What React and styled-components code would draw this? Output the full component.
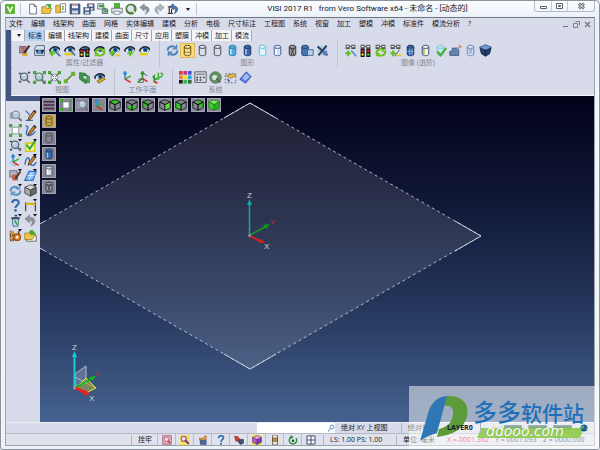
import React, { useState } from 'react';
import styled, { createGlobalStyle } from 'styled-components';

const GlobalStyle = createGlobalStyle`
  * { box-sizing: border-box; }
  body {
    margin: 0;
    background: #e6e9ee;
    font-family: "Open Sans", "Noto Sans CJK SC", sans-serif;
    font-size: 7px;
    line-height: 10px;
    color: #16181f;
  }
  button, input {
    margin: 0;
    padding: 0;
    border: 0;
    background: none;
    font: inherit;
    color: inherit;
  }
  svg { display: block; }
`;

// icon parts
const Eye = () => (
  <g>
    <path d="M1 8C3 2 12 0 15 6L13 10C11 6 5 6 3 10Z" fill="#1d2733" />
    <path d="M3 8C6 4 11 4 14 8C11 12 6 12 3 8Z" fill="#dfe9f4" />
    <circle cx="9" cy="7" r="3" fill="#2f6cab" />
    <circle cx="9" cy="7" r="1.2" fill="#0a1420" />
  </g>
);

const Glasses = () => (
  <g>
    <path d="M2 1h5v5h-5zM9 1h5v5h-5z" fill="#4a4d52" />
    <path d="M3 2h3v2h-3zM10 2h3v2h-3z" fill="#e8eaee" />
    <path d="M7 3h2" stroke="#222" />
  </g>
);

const Plus = () => <path d="M5 8v7M1.500 11.500h7" stroke="#5cc421" strokeWidth="2.400" />;
const Minus = () => <path d="M2 12.500h10" stroke="#e8cc10" strokeWidth="3" />;

const Lights = () => (
  <g>
    <path d="M2 6h5v10h-5zM9 6h5v10h-5z" fill="#151515" />
    <circle cx="4.500" cy="8.500" r="1.500" fill="#e42a1c" />
    <circle cx="11.500" cy="8.500" r="1.500" fill="#e42a1c" />
    <circle cx="4.500" cy="13" r="1.500" fill="#f2c81c" />
    <circle cx="11.500" cy="13" r="1.500" fill="#39c22c" />
  </g>
);

const Ring = ({ color = '#6fbf1f' }) => (
  <g fill="none" stroke={color} strokeWidth="2.600">
    <path d="M3 11C3 7 9 5 12 8" />
    <path d="M14 9C14 14 8 16 4 13" />
    <path d="M10 9h4v-4M7 12H3v3" strokeWidth="1.600" />
  </g>
);

const Cyl = ({ fill = 'none', line = '#46494f', shine }) => (
  <g stroke={line} strokeWidth="1.200">
    <path d="M4 3.500v9C4 15 12 15 12 12.500v-9" fill={fill} />
    <ellipse cx="8" cy="3.500" rx="4" ry="2" fill={fill} />
    {shine && <path d="M6 6v7" stroke={shine} strokeWidth="2" />}
  </g>
);

const Cube = ({ top = 'none', left = 'none', right = 'none', line = '#0d140d' }) => (
  <g stroke={line} strokeLinejoin="round">
    <path d="M8 1L15 4L8 7.500L1 4Z" fill={top} />
    <path d="M1 4v7.500L8 15V7.500Z" fill={left} />
    <path d="M15 4v7.500L8 15V7.500Z" fill={right} />
  </g>
);

const Lens = ({ color = '#8a96a6' }) => (
  <g>
    <path d="M10 10L14.500 14.500" stroke="#6b7078" strokeWidth="2.200" />
    <circle cx="7.500" cy="7" r="4.500" fill="#b9cde2" stroke={color} strokeWidth="1.500" />
    <path d="M5 6C6 4 8 4 9 5" fill="none" stroke="#fff" />
  </g>
);

const Corners = ({ inner = '#fff' }) => (
  <g>
    <path d="M2 2l3 3M14 2l-3 3M2 14l3-3M14 14l-3-3" stroke="#3d7a2a" />
    <path d="M4 4h8v8h-8z" fill={inner} stroke="#7f8a92" />
    <path d="M0 0h4v4h-4zM12 0h4v4h-4zM0 12h4v4h-4zM12 12h4v4h-4z" fill="#46a533" />
  </g>
);

const Axes = () => (
  <g fill="none" strokeWidth="2">
    <path d="M5 10V2M3 4l2-3 2 3" stroke="#2a8fd8" />
    <path d="M5 10L12 6" stroke="#3cb030" />
    <path d="M5 10L12 14" stroke="#e02a1c" />
  </g>
);

const Pencil = () => (
  <g>
    <path d="M6 10L12.500 1.500L15 3.500L8.500 12L5 14Z" fill="#c8802c" stroke="#4d3418" />
    <path d="M12.500 1.500L15 3.500L14 5L11.500 3Z" fill="#2a2c33" />
  </g>
);

const Drop = () => <path d="M11 0h5l-2.500 3z" fill="#111" />;

const Page = ({ fill = '#fff' }) => (
  <path d="M3.500 1.500h6l3 3v10h-9zM9.500 1.500v3h3" fill={fill} stroke="#4a5260" />
);

const Disk = () => (
  <g>
    <path d="M1.500 1.500h13v13h-13z" fill="#4a6596" stroke="#27375a" />
    <path d="M4 2h8v5h-8z" fill="#f0f3f8" />
    <path d="M4 10h8v4h-8z" fill="#ced6e2" />
    <path d="M4 3h8" stroke="#d85848" />
  </g>
);

const Folder = () => (
  <g>
    <path d="M1 5h5l1 2h7l-2 7H1z" fill="#f0c441" stroke="#a5791c" />
    <path d="M5 5C6 1 10 0 12 2l2-1-1 6-5-2 2-1C9 3 7 3 5 5Z" fill="#4dae2d" />
  </g>
);

const Bend = ({ color = '#8d949d' }) => (
  <path d="M7 1L1 6l6 5V8c4 0 4 3 1 7C16 12 15 4 7 4Z" fill={color} stroke="#73797f" strokeWidth="0.600" />
);

const glyphs = {
  logo: <g><rect width="16" height="16" rx="2" fill="#5fb432" /><path d="M4 4l4 8 4-8" fill="none" stroke="#fff" strokeWidth="2.400" /></g>,
  page: <Page />,
  folder: <Folder />,
  folderPage: <g><path d="M7 1h7v11H7z" fill="#fff" stroke="#65707c" /><path d="M1 3h5l1 3v7H1z" fill="#efc341" stroke="#a5791c" /><path d="M9 5h3M9 8h3" stroke="#6db535" strokeWidth="2" /></g>,
  disk: <Disk />,
  disks: <g><g transform="translate(5 0) scale(.68)"><Disk /></g><g transform="translate(0 5) scale(.68)"><Disk /></g></g>,
  mixed: <g><path d="M1 1h8v7H1z" fill="#e7ebf1" stroke="#4e5a70" /><path d="M3 4h6M9 7l5 4" stroke="#38a12c" strokeWidth="3" /><path d="M7 8h7v6H7z" fill="#a4afbf" stroke="#4e5a70" /><path d="M9 11h6" stroke="#36a92c" strokeWidth="2" /></g>,
  print: <g><path d="M4 0h8v7H4z" fill="#55b236" /><path d="M1 7h14v6H1z" fill="#e4e7eb" stroke="#575d65" /><path d="M4 11h8v4H4z" fill="#fff" stroke="#737981" /></g>,
  find: <g><circle cx="8" cy="8" r="7.500" fill="#5c7c4a" /><circle cx="7.500" cy="7.500" r="4" fill="#d3e7ef" stroke="#e7eee3" /><path d="M10 10l4 4" stroke="#e7eee3" strokeWidth="2" /></g>,
  undo: <Bend />,
  redo: <g transform="translate(16 0) scale(-1 1)"><Bend color="#b3b8bf" /></g>,
  history: <g><path d="M8 1L4 5l5 4V7c3 0 3 3 1 7 6-3 5-10-1-10z" fill="#4778b8" stroke="#2d4c7a" /><path d="M1 5h5M1 14h7M3 5v9M6 8v6" stroke="#4d2d2d" strokeWidth="1.600" /></g>,
  brush: <g><path d="M2 3h8v8H2z" fill="#a8a0b4" stroke="#694f58" /><path d="M4 5h4M4 8h5" stroke="#ce4a35" strokeWidth="2" /><path d="M7 12L14 2" stroke="#35322f" strokeWidth="2.500" /><path d="M5 13h7" stroke="#d6a62c" strokeWidth="3" /></g>,
  eyePage: <g><path d="M4 2h10v12H2V6z" fill="#d5e2f0" stroke="#3f5069" /><path d="M3 7h11l-2 5H5z" fill="#1b2939" /><circle cx="8" cy="10" r="2.500" fill="#5d9bd2" /></g>,
  eyePlusArrow: <g><Eye /><Plus /><path d="M9 9l6 6" stroke="#426fae" strokeWidth="2" /></g>,
  eyeMinusArrow: <g><Eye /><Minus /><path d="M10 9l5 5" stroke="#426fae" strokeWidth="2" /></g>,
  eyeLights: <g><Eye /><Lights /></g>,
  eyeRing: <g><Eye /><Ring /></g>,
  eyeSlash: <g><Eye /><Plus /><path d="M5 15l6-7" stroke="#555" /><path d="M9 14h6" stroke="#e8cc10" strokeWidth="2" /></g>,
  eyePlus: <g><Eye /><g transform="translate(4 0)"><Plus /></g></g>,
  eyeMinus: <g><Eye /><Minus /></g>,
  refresh: <g fill="none" stroke="#4d82b9" strokeWidth="2.400"><path d="M2 8C2 3 9 1 12 5M14 8c0 5-7 7-10 3" /><path d="M13 1v5H8M3 15v-5h5" strokeWidth="1.600" /></g>,
  cyl: <Cyl />,
  cylGold: <g><Cyl line="#5e4c1a" /><path d="M4 9c2 2 6 2 8 0" fill="none" stroke="#5e4c1a" strokeWidth="0.800" /></g>,
  cylSky: <Cyl fill="#49aee0" line="#317ba8" shine="#b5e3f7" />,
  cylBlue: <Cyl fill="#3a68ad" line="#1c3766" shine="#9fc0ec" />,
  cylCyan: <Cyl fill="#dff4fa" line="#52c6dd" />,
  cylHalf: <Cyl fill="#d6e1f2" line="#46639a" shine="#fff" />,
  cylWhite: <Cyl fill="#d3dae4" line="#4d525b" shine="#fff" />,
  cylDark: <g><Cyl fill="#9b9da3" line="#303237" /><path d="M6 5l4 9M10 5l-4 9" stroke="#303237" /></g>,
  cylBox: <g><g transform="translate(-3 0)"><Cyl fill="#4577b4" line="#24466f" /></g><path d="M8 7h7v7H8z" fill="#b7d0ec" stroke="#2f5a92" /></g>,
  tools: <g><path d="M2 2h12v12H2z" fill="#b9cde5" /><path d="M2 3l12 11M13 2L3 14" stroke="#2a3f5f" strokeWidth="2.400" /><circle cx="11" cy="11" r="3" fill="#5580b5" /></g>,
  gPlus: <g><Glasses /><Plus /><path d="M9 8l6 7" stroke="#5a8cc9" strokeWidth="2" /></g>,
  gLights: <g><Glasses /><Lights /></g>,
  gRing: <g><Glasses /><Ring /></g>,
  gSlash: <g><Glasses /><Plus /><path d="M7 15l6-8" stroke="#444" /><path d="M9 14h6" stroke="#e8cc10" strokeWidth="2" /></g>,
  cylGrid: <g><Cyl fill="#3765a8" line="#16305d" /><path d="M7 5v9M10 5v9M4 9h8" stroke="#9bbce8" /></g>,
  cylLime: <Cyl fill="#f2f6da" line="#355076" shine="#a3c94a" />,
  cylCheck: <g><Cyl fill="#b8e8f2" line="#7ccbdc" /><path d="M4 9l4 5 7-9" fill="none" stroke="#43ac24" strokeWidth="2.400" /></g>,
  cylPart: <g><path d="M4 5h8v9H1V9h3z" fill="#6383ae" stroke="#3b5378" /><path d="M10 6h3" stroke="#dae5f3" /><path d="M12 0l4 4-3 1z" fill="#ee7418" /></g>,
  cylPale: <g><Cyl fill="#d5e2f5" line="#6888b8" /><path d="M6 6l4 6M10 6l-4 6" stroke="#6888b8" /></g>,
  gem: <g><path d="M1 4l7-3 7 3-2 8-5 3-5-3z" fill="#223e68" stroke="#101c30" /><path d="M1 4l7 3 7-3-7-3z" fill="#6d9ad2" /><path d="M8 7v8" stroke="#0f1a2d" /></g>,
  zoomNet: <g><path d="M1 3h3M12 2h3M1 13h3" stroke="#444b55" strokeWidth="2" /><Lens color="#5a6472" /></g>,
  zoomFit: <g><Corners inner="#c8dbe8" /><Lens color="#568a60" /></g>,
  fit: <g><Corners inner="#e8eef0" /><path d="M3 3l4 4M13 3L9 7M3 13l4-4M13 13L9 9" stroke="#2a3a2a" /></g>,
  fitLight: <Corners />,
  link: <g><path d="M4 12l8-8" stroke="#58822b" strokeWidth="2" /><path d="M1 10h5v5H1zM10 1h5v5h-5z" fill="#6cb32d" /></g>,
  chain: <g><path d="M2 2l7 1v3L6 5v4l6 3-4 2-6-4z" fill="#3d9a4c" stroke="#276a36" /><path d="M9 4l5 3v7l-6 1 3-3V8z" fill="#5dba4b" stroke="#276a36" /></g>,
  eyeGold: <g><Eye /><path d="M5 12l8-4 2 2-8 5z" fill="#e1ad28" stroke="#845f12" /></g>,
  axes: <Axes />,
  axesHand: <g><path d="M2 14L8 9V2M6 4l2-3 2 3" fill="none" stroke="#36992d" strokeWidth="2" /><path d="M8 9l6 4" stroke="#d33824" strokeWidth="2" /><path d="M9 3l5 3M3 10h6v4H3" fill="none" stroke="#505760" /></g>,
  axesTwo: <g fill="none" strokeWidth="2"><path d="M4 14V6L2 8M4 11l4-2" stroke="#36992d" /><path d="M9 11V2M9 9l5-3M12 2l3 3" stroke="#4bb23d" /><path d="M4 13l4 2" stroke="#d33824" /></g>,
  palette: <g>{['#e33b2e', '#b3368f', '#4d4fcf', '#ef8824', '#ede12d', '#2da5df', '#1d1d1d', '#37b348', '#2f6f34'].map((c, i) => <rect key={c} x={(i % 3) * 5.500} y={Math.floor(i / 3) * 5.500} width="4.500" height="4.500" fill={c} />)}</g>,
  panel: <g><path d="M1 1h14v13H1z" fill="#d8dce2" stroke="#444a54" /><path d="M3 4h10" stroke="#444a54" /><path d="M3 8h2M7 8h2M11 8h2M3 11h2M7 11h2" stroke="#333" strokeWidth="2" /></g>,
  gearGreen: <g><circle cx="8" cy="8" r="7" fill="#58a24a" stroke="#53605a" /><circle cx="7" cy="8" r="4" fill="#d6e4dc" stroke="#56616e" /><path d="M9 9l5 5" stroke="#5a616b" strokeWidth="2.400" /></g>,
  select: <g><path d="M1.500 3.500h13v11h-13z" fill="none" stroke="#3b4b74" strokeDasharray="2 2" /><path d="M3 6l9-3 2 3-6 3z" fill="#e8ba51" stroke="#9c741e" /><path d="M4 10l3 3" stroke="#3b6bc2" strokeWidth="2" /></g>,
  tile: <g><path d="M9 1l6 6-7 8-7-5z" fill="#5b7de8" stroke="#3550ae" /><path d="M9 3l4 4-5 5-4-3z" fill="#a5bcf7" /></g>,
  menu: <path d="M1 3.500h14M1 8h14M1 12.500h14" stroke="#4a2545" strokeWidth="2" />,
  lens: <g><path d="M1 4h6v8H1z" fill="#94a2b4" /><g transform="translate(1 0)"><Lens /></g></g>,
  cubeTop: <Cube top="#35cf24" />,
  cubeBottom: <g><path d="M1 11.500L8 8l7 3.500L8 15z" fill="#35cf24" /><Cube /></g>,
  cubeLeftBack: <g><path d="M1 4l7-3v7l-7 3.500z" fill="#2cbd20" /><Cube /></g>,
  cubeRight: <Cube right="#58e33c" />,
  cubeLeft: <Cube left="#35cf24" />,
  cubeRightBack: <g><path d="M8 1l7 3v7.500L8 8z" fill="#2cbd20" /><Cube /></g>,
  cubeAll: <Cube top="#7cec5c" left="#3fce2a" right="#2aad1e" line="#1f7d17" />,
  cubeGray: <g><Cube top="#d5d7d8" left="#a6a8aa" right="#66696c" line="#3a3c3f" /><Drop /></g>,
  penLine: <g><path d="M2 2l5 5M2 14h9" stroke="#3d70b8" strokeWidth="1.600" /><Pencil /></g>,
  penCurve: <g><path d="M2 3C8 2 2 8 3 12S12 14 14 9" fill="none" stroke="#3d70b8" strokeWidth="1.800" /><Pencil /></g>,
  penWave: <g><path d="M1 13C3 2 6 3 7 9s5 7 8 1" fill="none" stroke="#3d70b8" strokeWidth="1.800" /><Pencil /><Drop /></g>,
  zoomDrop: <g><path d="M1 3h3M1 13h3M11 12h4" stroke="#444b55" strokeWidth="2" /><Lens color="#5a6472" /><Drop /></g>,
  check: <g><path d="M2 5h11v10H2z" fill="#f5f4c0" stroke="#d5cd16" strokeWidth="2" /><path d="M3 7l4 5 7-10" fill="none" stroke="#33a928" strokeWidth="2.400" /><Drop /></g>,
  axesDrop: <g><Axes /><path d="M2 8c-1 4 3 7 7 6" fill="none" stroke="#6fa8d8" /><Drop /></g>,
  brushDrop: <g><path d="M1 2h9v8H1z" fill="#b4afc2" stroke="#5c5d75" /><path d="M4 7h7v7H4z" fill="#c15e48" /><path d="M8 12l6-9" stroke="#4b3723" strokeWidth="2.400" /><Drop /></g>,
  plane: <g><path d="M6 3h9l-4 11H1z" fill="#8abdf0" stroke="#2f70b9" strokeWidth="1.400" /><path d="M10 4L6 14M4 8h9" stroke="#d7ebff" /><Drop /></g>,
  refreshDrop: <g><path d="M2 9C2 3 9 2 12 6M14 8c0 6-7 7-10 3" fill="none" stroke="#5d92c6" strokeWidth="2.600" /><path d="M8 6h5V3M8 10H3v4" fill="none" stroke="#5d92c6" strokeWidth="1.600" /><Drop /></g>,
  help: <g><path d="M4 5C4 0 12 0 12 4.500C12 8 8 7 8 11" fill="none" stroke="#356bab" strokeWidth="2.600" /><circle cx="8" cy="14" r="1.700" fill="#356bab" /></g>,
  dimension: <g><path d="M2 4v11M14 4v11" stroke="#4b4e40" strokeWidth="1.600" /><path d="M2 6h12" stroke="#d8b516" strokeWidth="2.600" /><Drop /></g>,
  trash: <g><path d="M4 6h8l-1 9H5z" fill="#b8dff0" stroke="#315e7c" /><path d="M3 5h10M7 2h3" stroke="#26455c" strokeWidth="2" /><path d="M7 8l3 5" stroke="#39a335" strokeWidth="2" /><Drop /></g>,
  undoDrop: <g><Bend /><Drop /></g>,
  book: <g><path d="M2 2v13M5 3v12M12 2v5" stroke="#6b4a3a" strokeWidth="2" /><path d="M1 4l6 2M1 12l5-2" stroke="#e6a13a" strokeWidth="2" /><circle cx="10" cy="10" r="4" fill="#ef8a26" stroke="#9d4e12" strokeWidth="1.600" /><circle cx="10" cy="10" r="1.500" fill="#fff" /><Drop /></g>,
  insert: <g><path d="M3 8h12v7H3z" fill="#fff" stroke="#4c5344" /><path d="M1 5h6l1 2h6l-4 6H1z" fill="#e9c847" stroke="#a5791c" /><path d="M6 4c2-4 5-3 6-1l3 3-6 1z" fill="#47a82c" /></g>,
  pinkBox: <g><path d="M1 1h14v14H1z" fill="#eba2b4" stroke="#8f5163" /><circle cx="7" cy="7" r="3.500" fill="#f8dde4" stroke="#9b5467" /><path d="M9 9l4 4" stroke="#7b3f51" strokeWidth="2" /></g>,
  yellowLens: <g><path d="M0 0h16v16H0z" fill="#f3e262" /><circle cx="6" cy="6" r="4" fill="#f5f0f7" stroke="#a75597" strokeWidth="2" /><path d="M8 8l6 6" stroke="#7e3a69" strokeWidth="3" /></g>,
  hand: <g><path d="M3 7h10v8H4z" fill="#446da5" stroke="#2d4568" /><path d="M2 5h7l2-4 3 1-2 6H4z" fill="#e8a04e" stroke="#9c5f1d" /></g>,
  redBlue: <g><path d="M1 2l6 1 2 6-6 1z" fill="#d63a3a" stroke="#892222" /><path d="M8 7h7v6l-5 2-3-4z" fill="#42546f" stroke="#1f2c41" /></g>,
  violetCube: <g><path d="M0 0h16v16H0z" fill="#f7e432" /><Cube top="#e8a8ee" left="#b15bd0" right="#7c3db2" line="#5e2b8a" /></g>,
  stack: <g><path d="M4 0h8v16H4z" fill="#ece4cd" stroke="#3f3c36" /><path d="M4 5h8v5H4z" fill="#d69035" stroke="#3f3c36" /></g>,
  spin: <g><path d="M5 3A6 6 0 1 0 13 5" fill="none" stroke="#2c9333" strokeWidth="2.200" /><path d="M4 0l5 3-5 4z" fill="#2c9333" /><circle cx="8" cy="9" r="2" fill="#1b4d23" /></g>,
  grid: <path d="M1.500 1.500h13v13h-13zM8 1.500v13M1.500 8h13" fill="#f6f8fc" stroke="#2a3b63" strokeWidth="1.400" />,
  search: <g><circle cx="10" cy="6" r="4" fill="#e7f1fb" stroke="#5b8fc6" strokeWidth="1.800" /><path d="M7 9l-5 6" stroke="#5b8fc6" strokeWidth="2.200" /></g>,
  globe: <g><circle cx="8" cy="8" r="7" fill="#1d50b0" /><path d="M3 4c4-3 8 0 5 3s-4 6-6 3zM11 8l4-1-2 6z" fill="#55b53a" /></g>,
};

const Glyph = ({ name, size = 12 }) => (
  <svg width={size} height={size} viewBox="0 0 16 16" aria-hidden="true">{glyphs[name]}</svg>
);

const quickTools = ['page', 'folder', 'folderPage', 'disk', 'disks', 'mixed', 'print', 'find', 'undo', 'redo', 'history'];
const menus = ['文件', '编辑', '线架构', '曲面', '网格', '实体编辑', '建模', '分析', '电极', '尺寸标注', '工程图', '系统', '视窗', '加工', '塑模', '冲模', '标准件', '模流分析', '?'];
const tabs = ['标准', '编辑', '线架构', '建模', '曲面', '尺寸', '应用', '塑膜', '冲模', '加工', '模流'];
const ribbonRows = [
  [
    { title: '属性/过滤器', icons: ['brush', 'eyePage', 'eyePlusArrow', 'eyeMinusArrow', 'eyeLights', 'eyeRing', 'eyeSlash', 'eyePlus', 'eyeMinus'] },
    { title: '图形', icons: ['refresh', 'cylGold', 'cyl', 'cyl', 'cylSky', 'cylBlue', 'cylCyan', 'cylHalf', 'cylDark', 'cylBox', 'tools'], active: 1 },
    { title: '图像 (进阶)', icons: ['gPlus', 'gLights', 'gRing', 'gSlash', 'cylGrid', 'cylLime', 'cylCheck', 'cylPart', 'cylPale', 'gem'] },
  ],
  [
    { title: '视图', icons: ['zoomNet', 'zoomFit', 'fit', 'link', 'chain', 'eyeGold'] },
    { title: '工作平面', icons: ['axes', 'axesHand', 'axesTwo'] },
    { title: '系统', icons: ['palette', 'panel', 'gearGreen', 'select', 'tile'] },
  ],
];
const sideTools = ['lens', 'penLine', 'fitLight', 'penCurve', 'zoomDrop', 'check', 'axesDrop', 'penWave', 'brushDrop', 'plane', 'refreshDrop', 'cubeGray', 'help', 'dimension', 'trash', 'undoDrop', 'book', 'insert'];
const viewTools = ['menu', 'fitLight', 'lens', 'axes', 'cubeTop', 'cubeBottom', 'cubeLeftBack', 'cubeRight', 'cubeLeft', 'cubeRightBack', 'cubeAll'];
const shadeTools = ['cylGold', 'cyl', 'cylBlue', 'cylWhite', 'cylDark'];
const statusTools = ['pinkBox', 'yellowLens', 'hand', 'help', 'redBlue', 'violetCube', 'stack', 'spin', 'grid'];

export default function App() {
  const [tab, setTab] = useState('标准');
  const [shade, setShade] = useState('cylGold');

  return (
    <>
      <GlobalStyle />
      <Window>
        <TitleBar>
          <Glyph name="logo" size={10} />
          <QuickBar>
            {quickTools.map((name) => (
              <QuickButton key={name} aria-label={name}><Glyph name={name} size={12} /></QuickButton>
            ))}
            <CaretButton aria-label="more"><Caret /></CaretButton>
          </QuickBar>
          <Title>VISI 2017 R1 &nbsp; from Vero Software x64 - 未命名 - [动态的]</Title>
          <WindowButtons>
            <WindowButton aria-label="minimize">
              <svg width="9" height="8"><path d="M1.500 4.500h6v2h-6z" fill="#fff" stroke="#5b616b" /></svg>
            </WindowButton>
            <WindowButton aria-label="maximize">
              <svg width="9" height="8"><path d="M1.500 1.500h6v5h-6zM3.500 3.500h2v1h-2z" fill="#fff" stroke="#5b616b" /></svg>
            </WindowButton>
            <WindowButton $wide aria-label="close">
              <svg width="9" height="8"><path d="M2 1.500l5 5M7 1.500l-5 5" stroke="#5b616b" strokeWidth="2.600" /><path d="M2 1.500l5 5M7 1.500l-5 5" stroke="#fff" /></svg>
            </WindowButton>
          </WindowButtons>
        </TitleBar>

        <Client>
          <MenuBar>
            {menus.map((m) => <MenuButton key={m}>{m}</MenuButton>)}
            <DocButtons>
              <DocButton aria-label="minimize document"><svg width="7" height="7"><path d="M1 5.500h5" stroke="#6d727c" /></svg></DocButton>
              <DocButton aria-label="restore document"><svg width="7" height="7"><path d="M2.500 .5h4v4M.5 2.500h4v4h-4z" fill="none" stroke="#7a7f89" /></svg></DocButton>
              <DocButton aria-label="close document"><svg width="7" height="7"><path d="M1 1l5 5M6 1l-5 5" stroke="#6d727c" strokeWidth="1.200" /></svg></DocButton>
            </DocButtons>
          </MenuBar>

          <RibbonWrap>
            <Ribbon>
              <Tabs>
                <Tab aria-label="tab list"><Caret /></Tab>
                {tabs.map((t) => (
                  <Tab key={t} $active={t === tab} onClick={() => setTab(t)}>{t}</Tab>
                ))}
              </Tabs>
              {ribbonRows.map((row, i) => (
                <GroupRow key={i}>
                  {row.map((group) => (
                    <Group key={group.title}>
                      <GroupIcons>
                        {group.icons.map((name, n) => (
                          <ToolButton key={n} $active={group.active === n} aria-label={name}><Glyph name={name} size={13} /></ToolButton>
                        ))}
                      </GroupIcons>
                      <GroupTitle>{group.title}</GroupTitle>
                    </Group>
                  ))}
                </GroupRow>
              ))}
            </Ribbon>
          </RibbonWrap>

          <Main>
            <SideBar>
              <SideCap />
              <SideGrid>
                {sideTools.map((name) => (
                  <ToolButton key={name} aria-label={name}><Glyph name={name} size={13} /></ToolButton>
                ))}
              </SideGrid>
            </SideBar>
            <Viewport>
              <Scene />
              <ViewBar>
                {viewTools.map((name) => (
                  <ViewButton key={name} aria-label={name}><Glyph name={name} /></ViewButton>
                ))}
              </ViewBar>
              <ShadeBar>
                {shadeTools.map((name) => (
                  <ViewButton key={name} $active={name === shade} onClick={() => setShade(name)} aria-label={name}>
                    <Glyph name={name} />
                  </ViewButton>
                ))}
              </ShadeBar>
            </Viewport>
          </Main>

          <StatusTop>
            <SearchBox>
              <SearchInput aria-label="search" />
              <Glyph name="search" size={8} />
            </SearchBox>
            <PlaneName>绝对 XY 上视图</PlaneName>
            <ViewName>绝对视图</ViewName>
            <Layer>LAYER0</Layer>
            <Meters>
              <Meter />
              <Meter />
              <Meter />
            </Meters>
            <Globe><Glyph name="globe" size={8} /></Globe>
          </StatusTop>
          <StatusBottom>
            <Lock>拴牢</Lock>
            <StatusIcons>
              {statusTools.map((name) => (
                <StatusButton key={name} aria-label={name}><Glyph name={name} size={10} /></StatusButton>
              ))}
            </StatusIcons>
            <Scale>LS: 1.00 PS: 1.00</Scale>
            <Unit>单位: 毫米</Unit>
            <Coords>
              <Coord $hot>X =-0001.362</Coord>
              <Coord>Y = 0007.093</Coord>
              <Coord>Z = 0000.000</Coord>
            </Coords>
          </StatusBottom>
        </Client>

        <Brand>
          <BrandMark />
          <BrandText>
            <BrandName><BrandLead>多多</BrandLead>软件站</BrandName>
            <BrandUrl>ddooo.com</BrandUrl>
          </BrandText>
        </Brand>
      </Window>
    </>
  );
}

// work plane and coordinate axes
function Scene() {
  return (
    <SceneSvg viewBox="0 0 555 326" preserveAspectRatio="xMinYMin slice" aria-hidden="true">
      <path d="M210 7L441 140L210 273L-21 140Z" fill="#fff" fillOpacity="0.110" />
      <g stroke="#c9ced8" strokeWidth="1" fill="none">
        <path d="M210 7L441 140L210 273L-21 140Z" strokeDasharray="3 3" strokeOpacity="0.850" />
        <path d="M184 22L210 7L236 22M415 125L441 140L415 155M236 258L210 273L184 258M-21 140L4 125.500M-21 140L4 154.500" />
      </g>

      <path d="M209.500 139V108" stroke="#16a5ae" strokeWidth="1.500" />
      <path d="M209.500 103l2.500 6h-5z" fill="#16a5ae" />
      <path d="M210 139L225 131" stroke="#149a1c" strokeWidth="1.500" />
      <path d="M230 128l-4 5-3-4z" fill="#149a1c" />
      <path d="M210 140L220 145" stroke="#e01c20" strokeWidth="2" />
      <path d="M225 147l-6 0 2-4z" fill="#e01c20" />
      <circle cx="209.500" cy="139.500" r="1.500" fill="#8b8f98" />
      <AxisText x="207" y="102">Z</AxisText>
      <AxisText x="230" y="129" $red>Y</AxisText>
      <AxisText x="224" y="153">X</AxisText>

      <path d="M35 290V278L46 270V287Z" fill="#97a5bd" fillOpacity="0.400" stroke="#b3bccb" />
      <path d="M35 281L46 287L56 292" fill="none" stroke="#b3bccb" />
      <path d="M37 291L46 282L56 292L46 297Z" fill="#a0a642" fillOpacity="0.650" stroke="#dbe22c" />
      <path d="M34.500 292V260" stroke="#10cfd6" strokeWidth="2" />
      <path d="M34.500 255l2.500 6h-5z" fill="#10cfd6" />
      <path d="M36 291L51 283" stroke="#14b31c" strokeWidth="1.500" />
      <path d="M56 280l-4 5-3-4z" fill="#14b31c" />
      <path d="M36 292L46 297" stroke="#ee1c1c" strokeWidth="3" />
      <path d="M50 299l-6 0 2-5z" fill="#ee1c1c" />
      <circle cx="34.500" cy="292" r="1.500" fill="#9a9aa0" />
      <AxisText x="32" y="254">Z</AxisText>
      <AxisText x="55" y="281" $red>Y</AxisText>
      <AxisText x="49" y="305">X</AxisText>
    </SceneSvg>
  );
}

function BrandMark() {
  return (
    <MarkSvg viewBox="0 0 190 63" aria-hidden="true">
      <path d="M72 42H175L171 52H68Z" fill="#8fcb4a" fillOpacity="0.900" />
      <path d="M37 10C52 9 61 17 58 30C55 43 44 49 28 51L30 43C38 41 43 37 44 29C45 22 42 19 35 20Z" fill="#5b9b3a" />
      <path d="M38 10L28 47C22 49 16 51 11 55L20 24C24 15 29 11 38 10Z" fill="#2f76b5" />
    </MarkSvg>
  );
}

const Window = styled.div`
  position: relative;
  display: flex;
  flex-direction: column;
  min-height: 100vh;
  padding: 0 4px 3px;
  border: 1px solid #8b929c;
  border-radius: 5px 5px 3px 3px;
  background: linear-gradient(#fbfdfe, #e9f1f8 17px, #f4f8fb 120px, #eef3f7);
`;

const TitleBar = styled.header`
  display: flex;
  align-items: center;
  height: 16px;
`;

const QuickBar = styled.div`
  display: flex;
  align-items: center;
  margin-left: 5px;
  padding-left: 5px;
  border-left: 1px solid #c3c9d1;
  border-right: 1px solid #c3c9d1;
`;

const QuickButton = styled.button`
  display: grid;
  place-items: center;
  width: 14px;
  height: 12px;
`;

const Caret = styled.span`
  border: 2px solid transparent;
  border-top: 3px solid #15181e;
  border-bottom: 0;
`;

const CaretButton = styled(QuickButton)`
  width: 16px;
`;

const Title = styled.h1`
  flex: 1;
  margin: 0;
  padding-left: 4px;
  text-align: center;
  font-family: Roboto, "Noto Sans CJK SC", sans-serif;
  font-size: 8px;
  font-weight: 400;
  line-height: 12px;
`;

const WindowButtons = styled.div`
  display: flex;
  align-self: flex-start;
  border: 1px solid #b4bac3;
  border-top: 0;
  border-radius: 0 0 3px 3px;
`;

const WindowButton = styled.button`
  display: grid;
  place-items: center;
  width: ${(p) => (p.$wide ? 27 : 16)}px;
  height: 10px;

  & + & {
    border-left: 1px solid #c6ccd4;
  }
`;

const Client = styled.main`
  display: flex;
  flex: 1;
  flex-direction: column;
  border: 1px solid #9aa2ae;
  border-top-color: #6f7784;
  background: #d8dbe9;
`;

const MenuBar = styled.nav`
  display: flex;
  align-items: center;
  gap: 8px;
  height: 12px;
  padding: 0 3px;
`;

const MenuButton = styled.button`
  white-space: nowrap;
`;

const DocButtons = styled.div`
  display: flex;
  gap: 4px;
  margin-left: auto;
`;

const DocButton = styled.button`
  width: 7px;
  height: 7px;
`;

const RibbonWrap = styled.section`
  padding-left: 5px;
  background: #42577f;
`;

const Ribbon = styled.div`
  border-bottom: 1px solid #f4f5f9;
  background: #d8dbe9;
`;

const Tabs = styled.div`
  display: flex;
  padding-left: 1px;
`;

const Tab = styled.button`
  display: grid;
  place-items: center;
  min-width: 13px;
  height: 11px;
  padding: 0 2px 0 3px;
  border-right: 1px solid #a3a7b3;
  background: ${(p) => (p.$active ? '#b4d5f5' : '#f4f4f8')};
`;

const GroupRow = styled.div`
  display: flex;
  height: 27px;
`;

const Group = styled.div`
  display: flex;
  flex-direction: column;
  align-items: center;
  padding: 2px 7px 0 5px;
  border-left: 1px dotted #a9adba;
`;

const GroupIcons = styled.div`
  display: flex;
`;

const GroupTitle = styled.div`
  color: #82858f;
`;

const ToolButton = styled.button`
  display: grid;
  place-items: center;
  width: 15px;
  height: 15px;
  border-radius: 1px;
  background: ${(p) => (p.$active ? '#f8dc82' : 'none')};
  box-shadow: ${(p) => (p.$active ? 'inset 0 0 0 1px #e3b84c' : 'none')};
`;

const Main = styled.div`
  display: flex;
  flex: 1;
  min-height: 240px;
`;

const SideBar = styled.aside`
  width: 34px;
`;

const SideCap = styled.div`
  height: 5px;
  background: #42577f;
`;

const SideGrid = styled.div`
  display: grid;
  grid-template-columns: repeat(2, 15px);
  justify-content: start;
  padding: 7px 0 0 2px;
`;

const Viewport = styled.div`
  position: relative;
  flex: 1;
  overflow: hidden;
  background: linear-gradient(#02021a, #121b3a 36%, #233459 62%, #45628f);
`;

const SceneSvg = styled.svg`
  position: absolute;
  inset: 0;
  width: 100%;
  height: 100%;
`;

const AxisText = styled.text`
  fill: ${(p) => (p.$red ? '#d62030' : '#d3d6dd')};
  font-family: "Liberation Sans", sans-serif;
  font-size: 8px;
`;

const ViewBar = styled.div`
  position: absolute;
  top: 2px;
  left: 2px;
  display: flex;
  justify-content: space-between;
  width: 179px;
`;

const ShadeBar = styled.div`
  position: absolute;
  top: 18px;
  left: 2px;
  display: flex;
  flex-direction: column;
  justify-content: space-between;
  height: 80px;
`;

const ViewButton = styled.button`
  display: grid;
  place-items: center;
  width: 14px;
  height: 14px;
  border: 1px solid #a3a3b0;
  background: ${(p) => (p.$active ? '#c9a955' : '#858594')};
`;

const StatusTop = styled.div`
  display: flex;
  align-items: center;
  height: 11px;
  padding-right: 6px;
  border-top: 1px solid #eceef4;
`;

const SearchBox = styled.label`
  display: flex;
  align-items: center;
  width: 78px;
  height: 10px;
  margin-left: auto;
  background: #fff;
`;

const SearchInput = styled.input`
  flex: 1;
  min-width: 0;
  height: 9px;
`;

const Cell = styled.div`
  padding-left: 6px;
  white-space: nowrap;
`;

const PlaneName = styled(Cell)`
  width: 67px;
  border-right: 1px solid #b0b4c0;
`;

const ViewName = styled(Cell)`
  width: 39px;
`;

const Layer = styled(Cell)`
  position: relative;
  z-index: 1;
  width: 40px;
  border-right: 1px solid #b0b4c0;
  font-weight: 700;
`;

const Meters = styled.div`
  display: flex;
  gap: 6px;
  padding: 0 8px 0 22px;
`;

const Meter = styled.div`
  width: 19px;
  height: 6px;
  border: 1px solid #4c7a6c;
  border-top-color: #3c5c8c;
  background: #0c5a0c;
`;

const Globe = styled.div`
  position: relative;
  z-index: 1;
`;

const StatusBottom = styled.div`
  display: flex;
  align-items: center;
  height: 12px;
  padding-right: 6px;
  border-top: 1px solid #b4b8c4;
  background: #dfe2ec;
`;

const Lock = styled(Cell)`
  margin-left: auto;
  border-left: 1px solid #b0b4c0;
`;

const StatusIcons = styled.div`
  display: flex;
  margin: 0 4px 0 5px;
`;

const StatusButton = styled.button`
  display: grid;
  place-items: center;
  width: 18px;
  height: 11px;
  border-left: 1px solid #b9bdc9;
`;

const Scale = styled(Cell)`
  width: 74px;
  border-left: 1px solid #b0b4c0;
  border-right: 1px solid #b0b4c0;
`;

const Unit = styled(Cell)`
  width: 50px;
`;

const Coords = styled.div`
  display: flex;
  gap: 3px;
`;

const Coord = styled.span`
  width: 45px;
  color: ${(p) => (p.$hot ? '#f00000' : '#16181f')};
  white-space: nowrap;
`;

const Brand = styled.div`
  position: absolute;
  right: 0;
  bottom: 0;
  width: 190px;
  height: 63px;
  background: rgba(255, 255, 255, 0.5);
  pointer-events: none;
`;

const MarkSvg = styled.svg`
  position: absolute;
  inset: 0;
`;

const BrandText = styled.div`
  position: relative;
  display: flex;
  flex-direction: column;
  padding: 12px 0 0 64px;
`;

const BrandName = styled.div`
  color: #1f6fb8;
  font-family: "Noto Sans CJK SC", sans-serif;
  font-size: 21px;
  font-weight: 500;
  line-height: 26px;
`;

const BrandLead = styled.span`
  font-size: 24px;
`;

const BrandUrl = styled.div`
  padding-left: 13px;
  color: #fff;
  font-family: "DejaVu Sans", sans-serif;
  font-size: 14px;
  font-style: italic;
  line-height: 12px;
  text-shadow: 0 0 1px #6f9a52;
`;
